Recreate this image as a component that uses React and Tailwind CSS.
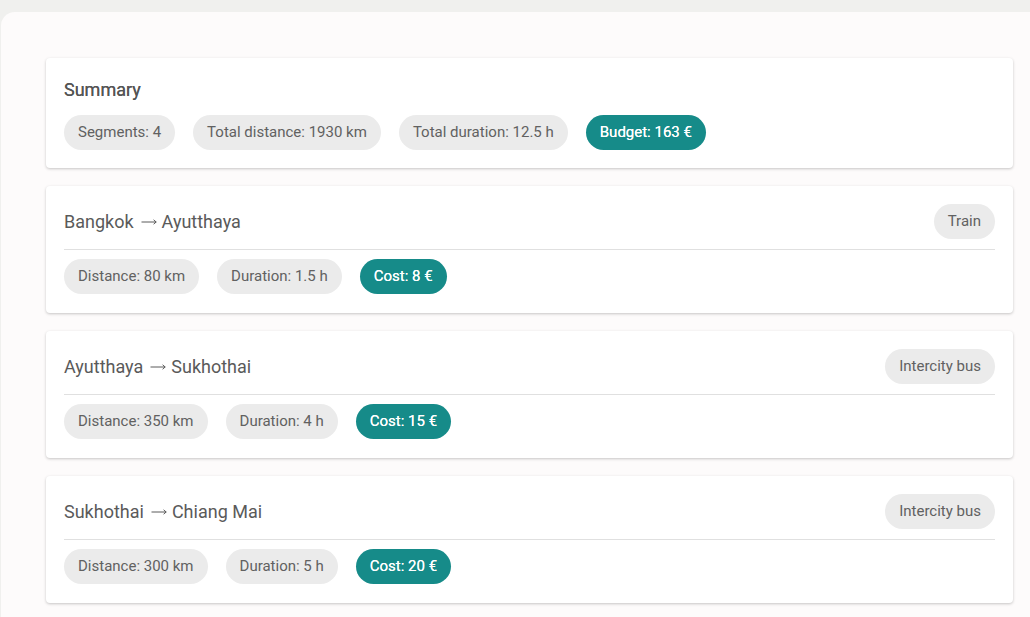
const summary = [
  { label: "Segments: 4" },
  { label: "Total distance: 1930 km" },
  { label: "Total duration: 12.5 h" },
  { label: "Budget: 163 €", accent: true },
];

const segments = [
  { from: "Bangkok", to: "Ayutthaya", mode: "Train", distance: 80, duration: 1.5, cost: 8 },
  { from: "Ayutthaya", to: "Sukhothai", mode: "Intercity bus", distance: 350, duration: 4, cost: 15 },
  { from: "Sukhothai", to: "Chiang Mai", mode: "Intercity bus", distance: 300, duration: 5, cost: 20 },
];

function Chip({ children, accent }) {
  return (
    <span
      className={`flex h-[35px] items-center rounded-full px-[14px] text-[15px] whitespace-nowrap ${
        accent ? "bg-[#168b89] text-white [text-shadow:0_0_0.4px_#fff]" : "bg-[#ebebeb] text-[#616161]"
      }`}
    >
      {children}
    </span>
  );
}

function Card({ children }) {
  return (
    <section className="rounded-[4px] bg-white px-[18px] shadow-[0_1px_3px_rgba(0,0,0,0.22)]">
      {children}
    </section>
  );
}

function Arrow() {
  return (
    <svg
      width="16"
      height="10"
      viewBox="0 0 16 10"
      fill="none"
      stroke="#5a5a5a"
      strokeWidth="1"
      className="mr-[5px] ml-[7px] mt-[1px]"
      aria-label="to"
    >
      <path d="M0.5 5 H15.2" />
      <path d="M12.6 2.8 L15.2 5 L12.6 7.2" />
    </svg>
  );
}

export default function App() {
  return (
    <div
      className="min-h-screen bg-[#f0f0ee] pt-[12px] pl-[1px]"
      style={{ fontFamily: "Roboto, 'Noto Sans', sans-serif" }}
    >
      <main className="min-h-[605px] rounded-tl-[14px] bg-[#fdfbfb] pt-[46px] pr-[17px] pl-[45px]">
        <div className="flex flex-col gap-[18px]">
          <Card>
            <div className="pt-[20px] pb-[18px]">
              <h2 className="text-[18px] leading-6 text-[#555] [text-shadow:0_0_0.5px_#555]">Summary</h2>
              <div className="mt-[13px] flex gap-[18px]">
                {summary.map((item) => (
                  <Chip key={item.label} accent={item.accent}>
                    {item.label}
                  </Chip>
                ))}
              </div>
            </div>
          </Card>

          {segments.map((seg) => (
            <Card key={seg.from}>
              <div className="pt-[18px] pb-[19px]">
                <div className="flex items-center justify-between">
                  <h3 className="flex items-center text-[18px] text-[#5a5a5a]">
                    <span>{seg.from}</span>
                    <Arrow />
                    <span>{seg.to}</span>
                  </h3>
                  <Chip>{seg.mode}</Chip>
                </div>
                <div className="mt-[10px] border-t border-[#e0e0e0] pt-[9px]">
                  <div className="flex gap-[18px]">
                    <Chip>Distance: {seg.distance} km</Chip>
                    <Chip>Duration: {seg.duration} h</Chip>
                    <Chip accent>Cost: {seg.cost} €</Chip>
                  </div>
                </div>
              </div>
            </Card>
          ))}
        </div>
      </main>
    </div>
  );
}
